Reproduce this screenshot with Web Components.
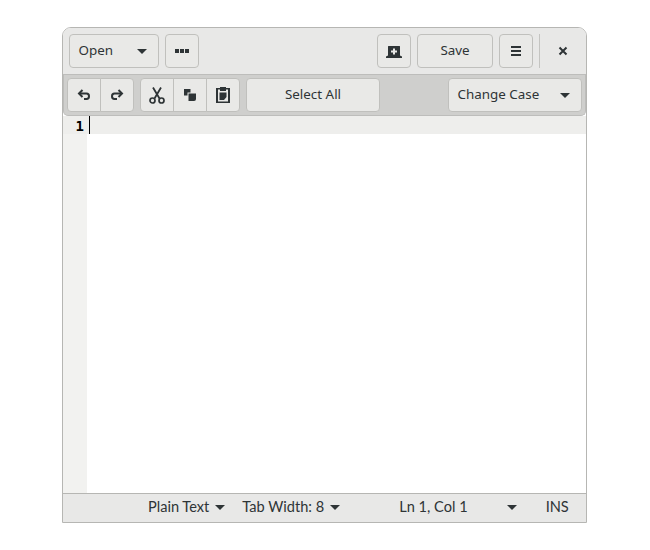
<!DOCTYPE html>
<html><head><meta charset="utf-8"><style>
html,body{margin:0;padding:0;background:#fff;width:650px;height:550px;overflow:hidden}
body{font-family:"Noto Sans","Open Sans",sans-serif;color:#2e3436;padding:27px 0 0 62px;box-sizing:border-box}
</style></head><body>
<editor-window>
<header-bar slot="header">
<tool-button style="width:90px" label="Open"></tool-button>
<tool-button style="width:34px;margin-left:6px"><svg width="16" height="16" viewBox="0 0 16 16" fill="#2e3436"><rect x="1" y="6" width="4" height="4"/><rect x="6" y="6" width="4" height="4"/><rect x="11" y="6" width="4" height="4"/></svg></tool-button>
<span style="flex:1"></span>
<tool-button style="width:34px"><svg width="18" height="16" viewBox="0 0 18 16" fill="#2e3436"><path fill-rule="evenodd" d="M3 3.500Q3 3 3.500 3H14.500Q15 3 15 3.500V12.500L17 13.500V15H1V13.500L3 12.500ZM8 5.500V7.500H6V9.500H8V11.500H10V9.500H12V7.500H10V5.500Z"/></svg></tool-button>
<tool-button style="width:76px;margin-left:6px" label="Save" center></tool-button>
<tool-button style="width:34px;margin-left:6px"><svg width="16" height="16" viewBox="0 0 16 16" fill="#2e3436"><rect x="3" y="3" width="10" height="2"/><rect x="3" y="7" width="10" height="2"/><rect x="3" y="11" width="10" height="2"/></svg></tool-button>
<span style="width:1px;height:34px;background:#c4c4c1;margin-left:6px"></span>
<span style="width:46px;display:flex;justify-content:center"><svg width="16" height="16" viewBox="0 0 16 16" fill="none" stroke="#2e3436" stroke-width="2"><path d="M4.500 4.500L11.500 11.500M11.500 4.500L4.500 11.500"/></svg></span>
</header-bar>
<action-bar slot="toolbar">
<button-group>
<tool-button group style="width:34px"><svg width="16" height="16" viewBox="0 0 16 16" fill="none" stroke="#2e3436" stroke-width="2"><path d="M3.500 6.500H10.500Q13 6.500 13 9.250T10.500 12H8"/><path d="M6.500 3L3 6.500L6.500 10"/></svg></tool-button>
<tool-button group style="width:34px"><svg width="16" height="16" viewBox="0 0 16 16" fill="none" stroke="#2e3436" stroke-width="2"><path d="M12.500 6.500H5.500Q3 6.500 3 9.250T5.500 12H8"/><path d="M9.500 3L13 6.500L9.500 10"/></svg></tool-button>
</button-group>
<button-group style="margin-left:6px">
<tool-button group style="width:34px"><svg width="16" height="17" viewBox="0 0 16 17" fill="none" stroke="#2e3436"><path stroke-width="1.800" d="M4 0.500L10.500 11.500M12 0.500L5.500 11.500"/><circle cx="3.500" cy="13.500" r="2.500" stroke-width="1.700"/><circle cx="12.500" cy="13.500" r="2.500" stroke-width="1.700"/></svg></tool-button>
<tool-button group style="width:34px"><svg width="16" height="16" viewBox="0 0 16 16" fill="#2e3436"><path d="M2 2H8.500V5.500H5.500V8.500H2Z"/><path d="M6.500 6.500H14V12Q14 14 12 14H6.500Z"/></svg></tool-button>
<tool-button group style="width:34px"><svg width="16" height="16" viewBox="0 0 16 16" fill="#2e3436"><path fill-rule="evenodd" d="M5 1V0H11V1H15V16H1V1ZM3 2.500V14.500H13V2.500H11V4H5V2.500Z"/><path d="M4.500 5.500H11.500V10L9 13H4.500Z"/></svg></tool-button>
</button-group>
<tool-button style="width:134px;margin-left:6px" label="Select All" center></tool-button>
<span style="flex:1"></span>
<tool-button style="width:134px" label="Change Case"></tool-button>
</action-bar>
<code-area slot="editor"></code-area>
<status-bar slot="status">
<status-item style="margin-left:85px" label="Plain Text" caret></status-item>
<status-item style="margin-left:17px" label="Tab Width: 8" caret></status-item>
<status-item style="margin-left:59px;gap:39px" label="Ln 1, Col 1" caret></status-item>
<status-item style="margin-left:29px" label="INS"></status-item>
</status-bar>
</editor-window>
<script>
const def=(name,css,html,init)=>customElements.define(name,class extends HTMLElement{
  constructor(){super();const r=this.attachShadow({mode:"open"});r.innerHTML=`<style>${css}</style>${html}`;}
  connectedCallback(){init&&init(this,this.shadowRoot);}
});
def("editor-window",`:host{display:flex;flex-direction:column;width:525px;height:496px;box-sizing:border-box;border:1px solid #b6b6b3;border-radius:9px 9px 0 0;overflow:hidden;background:#fff}`,
`<slot name="header"></slot><slot name="toolbar"></slot><slot name="editor"></slot><slot name="status"></slot>`);
def("header-bar",`:host{display:flex;align-items:center;height:47px;flex:none;box-sizing:border-box;padding:0 0 0 6px;background:#e8e8e7;border-bottom:1px solid #bdbdbb}`,`<slot></slot>`);
def("action-bar",`:host{display:flex;align-items:center;height:41px;flex:none;box-sizing:border-box;padding:0 3px;background:#cfcfcd;border:1px solid #bdbdbb;border-top:0;border-radius:0 0 5px 5px}`,`<slot></slot>`);
def("button-group",`:host{display:flex}
::slotted(tool-button:not(:first-child)){margin-left:-1px;border-top-left-radius:0;border-bottom-left-radius:0}
::slotted(tool-button:not(:last-child)){border-top-right-radius:0;border-bottom-right-radius:0}`,`<slot></slot>`);
def("tool-button",`:host{display:inline-flex;box-sizing:border-box;height:34px;flex:none;align-items:center;justify-content:center;border:1px solid #c0c0bd;border-radius:4px;background:#e9e9e7;font-size:13.400px;color:#2e3436}
:host([label]){padding-bottom:2px}
:host([label]:not([center])){justify-content:space-between;padding:0 11px 2px 8.500px}
.c{width:0;height:0;border:5px solid transparent;border-top:5px solid #2e3436;border-bottom:0;margin-top:3px}
.t:empty{display:none}`,`<span class="t"></span><slot></slot>`,(h,r)=>{
  const t=r.querySelector(".t");t.textContent=h.getAttribute("label")||"";
  if(h.hasAttribute("label")&&!h.hasAttribute("center")){const c=document.createElement("span");c.className="c";r.appendChild(c);}
});
def("code-area",`:host{display:flex;flex:1;min-height:0;background:#fff}
.g{width:24px;flex:none;background:#f2f2f0;height:100%}
.h{height:18px;background:#eeeeec;display:flex;justify-content:flex-end;align-items:center;padding:2px 3px 0 0;box-sizing:border-box}
b{font:bold 14px "DejaVu Sans Mono",monospace;color:#000;line-height:16px}
.m{flex:1}
.l{height:18px;background:#eeeeec;display:flex}
i{display:block;width:1px;height:18px;background:#000;margin-left:2px}`,
`<div class="g"><div class="h"><b>1</b></div></div><div class="m"><div class="l"><i></i></div></div>`);
def("status-bar",`:host{display:flex;align-items:center;height:29px;flex:none;box-sizing:border-box;background:#e8e8e7;border-top:1px solid #b6b6b3;padding-bottom:3px;font:14.600px "Lato",sans-serif;color:#2e3436}`,`<slot></slot>`);
def("status-item",`:host{display:inline-flex;align-items:center;gap:6px;white-space:nowrap}
.c{width:0;height:0;border:5px solid transparent;border-top:5px solid #2e3436;border-bottom:0;margin-top:2px}`,`<span class="t"></span>`,(h,r)=>{
  r.querySelector(".t").textContent=h.getAttribute("label");
  if(h.hasAttribute("caret")){const c=document.createElement("span");c.className="c";r.appendChild(c);}
});
</script>
</body></html>
